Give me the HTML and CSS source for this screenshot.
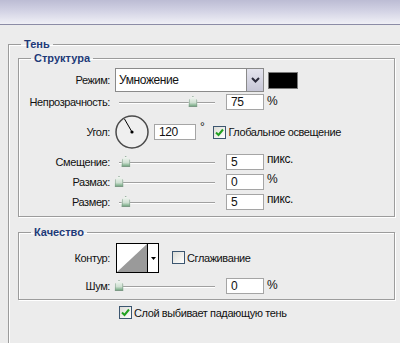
FILE: index.html
```html
<!DOCTYPE html>
<html lang="ru">
<head>
    <meta charset="UTF-8">
    <meta name="viewport" content="width=device-width, initial-scale=1.0">
    <title>Тень</title>
    <link rel="stylesheet" href="styles.css">
</head>
<body>
    <div class="titlebar"></div>

    <fieldset class="group group-outer">
        <legend>Тень</legend>

        <!-- Структура -->
        <fieldset class="group group-inner group-structure">
            <legend>Структура</legend>

            <div class="row row-mode">
                <span class="label">Режим:</span>
                <div class="select">
                    <span class="select-value">Умножение</span>
                    <span class="select-btn">
                        <svg width="9" height="6" viewBox="0 0 9 6"><path d="M1 1 L4.5 4.5 L8 1" fill="none" stroke="#2a2a3a" stroke-width="2"/></svg>
                    </span>
                </div>
                <span class="swatch"></span>
            </div>

            <div class="row row-field">
                <span class="label">Непрозрачность:</span>
                <div class="slider"><span class="thumb" style="left: 77%"></span></div>
                <span class="field">75</span>
                <span class="unit">%</span>
            </div>

            <div class="row row-angle">
                <span class="label">Угол:</span>
                <svg class="dial" width="36" height="36" viewBox="0 0 36 36">
                    <circle cx="18" cy="18" r="16" fill="#efefef" stroke="#4a4a4a" stroke-width="1.5"/>
                    <line x1="18" y1="18" x2="10.5" y2="5" stroke="#000" stroke-width="1"/>
                    <circle cx="18" cy="18" r="1.6" fill="#000"/>
                </svg>
                <span class="field field-angle">120</span>
                <span class="degree">°</span>
                <label class="check">
                    <span class="box checked">
                        <svg width="11" height="11" viewBox="0 0 11 11"><path d="M2 5.5 L4.5 8 L9 2.5" fill="none" stroke="#21a121" stroke-width="2"/></svg>
                    </span>
                    Глобальное освещение
                </label>
            </div>

            <div class="row row-slider">
                <span class="label">Смещение:</span>
                <div class="slider"><span class="thumb" style="left: 7%"></span></div>
                <span class="field">5</span>
                <span class="unit">пикс.</span>
            </div>

            <div class="row row-slider">
                <span class="label">Размах:</span>
                <div class="slider"><span class="thumb" style="left: 0%"></span></div>
                <span class="field">0</span>
                <span class="unit">%</span>
            </div>

            <div class="row row-slider">
                <span class="label">Размер:</span>
                <div class="slider"><span class="thumb" style="left: 7%"></span></div>
                <span class="field">5</span>
                <span class="unit">пикс.</span>
            </div>
        </fieldset>

        <!-- Качество -->
        <fieldset class="group group-inner group-quality">
            <legend>Качество</legend>

            <div class="row row-contour">
                <span class="label">Контур:</span>
                <div class="contour">
                    <svg class="contour-preview" width="30" height="28" viewBox="0 0 30 28">
                        <rect width="30" height="28" fill="#fff"/>
                        <path d="M0 28 L30 0 V28 Z" fill="#9a9a9a"/>
                    </svg>
                    <span class="contour-btn">
                        <svg width="5" height="3" viewBox="0 0 5 3"><path d="M0 0 H5 L2.5 3 Z" fill="#000"/></svg>
                    </span>
                </div>
                <label class="check check-smooth">
                    <span class="box"></span>
                    Сглаживание
                </label>
            </div>

            <div class="row row-field row-noise">
                <span class="label">Шум:</span>
                <div class="slider"><span class="thumb" style="left: 0%"></span></div>
                <span class="field">0</span>
                <span class="unit">%</span>
            </div>
        </fieldset>

        <div class="knockout">
            <label class="check">
                <span class="box checked">
                    <svg width="11" height="11" viewBox="0 0 11 11"><path d="M2 5.5 L4.5 8 L9 2.5" fill="none" stroke="#21a121" stroke-width="2"/></svg>
                </span>
                Слой выбивает падающую тень
            </label>
        </div>
    </fieldset>
</body>
</html>
```

FILE: styles.css
```css
body {
    margin: 0;
    width: 400px;
    height: 343px;
    overflow: hidden;
    background-color: #ececec;
    font-family: "Liberation Sans", Arial, sans-serif;
    font-size: 11px;
    letter-spacing: -0.4px;
    color: #111;
}

.titlebar {
    height: 24px;
    background: linear-gradient(#bcbcd4, #d2d2e4 45%, #f0f0f6);
    border-bottom: 1px solid #8c8ca6;
}

/* Group boxes */
.group {
    margin: 0;
    padding: 0;
    border: 1px solid #9c9c9c;
    box-shadow: inset 1px 1px 0 #fff, 1px 1px 0 #fff;
}

.group legend {
    font-weight: bold;
    line-height: 14px;
    letter-spacing: 0;
    color: #1e3a78;
    padding: 0 3px;
}

.group-outer {
    margin: 12px 0 0 8px;
    padding: 0 0 0 9px;
    width: 392px;
    height: 306px;
    box-sizing: border-box;
    border-right: none;
    border-bottom: none;
}

.group-outer > legend {
    margin-left: 3px;
}

.group-inner {
    width: 377px;
    box-sizing: border-box;
}

.group-inner > legend {
    margin-left: 12px;
}

.group-structure {
    padding: 3px 0 4px;
}

.group-quality {
    margin-top: 8px;
    padding: 4px 0 5px;
}

/* Rows */
.row {
    display: flex;
    align-items: center;
}

.label {
    width: 91px;
    flex: none;
    text-align: right;
}

.row-mode {
    height: 24px;
    margin-bottom: 2px;
}

.row-field {
    height: 16px;
}

.row-angle {
    height: 40px;
    margin-top: 2px;
}

.row-slider {
    height: 20px;
}

.row-contour {
    height: 30px;
}

.row-noise {
    margin-top: 5px;
}

/* Select */
.select {
    display: flex;
    margin-left: 5px;
    height: 24px;
}

.select-value {
    width: 127px;
    padding-left: 3px;
    background-color: #fff;
    border: 1px solid #8a8a8a;
    border-right: none;
    display: flex;
    align-items: center;
    font-size: 12px;
}

.select-btn {
    width: 16px;
    border: 1px solid #8a8a8a;
    background: linear-gradient(#e4e4ee, #c6c6d6);
    display: flex;
    justify-content: center;
    align-items: center;
}

.swatch {
    width: 28px;
    height: 15px;
    margin-left: 4px;
    background-color: #000;
    border: 1px solid #7a7a7a;
}

/* Sliders */
.slider {
    position: relative;
    width: 96px;
    height: 12px;
    margin-left: 9px;
    margin-right: 11px;
}

.slider::before {
    content: "";
    position: absolute;
    left: 0;
    right: 0;
    top: 6px;
    border-top: 1px solid #a0a0a0;
    border-bottom: 1px solid #fff;
}

.thumb {
    position: absolute;
    top: 0;
    width: 9px;
    height: 11px;
    transform: translateX(-50%);
    background: linear-gradient(#f6f9f6, #cfe0d2 60%, #5f9c6f);
    clip-path: polygon(50% 0, 100% 38%, 100% 100%, 0 100%, 0 38%);
    box-shadow: inset 0 0 0 1px #7d9a86;
}

/* Fields */
.field {
    width: 32px;
    height: 14px;
    padding-left: 4px;
    background-color: #fff;
    border: 1px solid #a5a5a5;
    display: flex;
    align-items: center;
    font-size: 12px;
}

.unit {
    margin-left: 3px;
    align-self: flex-start;
    font-size: 12px;
}

/* Angle */
.dial {
    margin-left: 4px;
}

.field-angle {
    width: 36px;
    margin-left: 4px;
}

.degree {
    align-self: flex-start;
    margin: 8px 0 0 4px;
    font-size: 12px;
}

/* Checkboxes */
.check {
    display: flex;
    align-items: center;
    gap: 2px;
}

.row-angle .check {
    margin-left: 9px;
}

.box {
    width: 11px;
    height: 11px;
    border: 1px solid #3c5670;
    background: linear-gradient(135deg, #dcdcd6, #fff);
    display: flex;
    justify-content: center;
    align-items: center;
}

/* Contour */
.contour {
    display: flex;
    margin-left: 6px;
    height: 28px;
    border: 1px solid #000;
}

.contour-btn {
    width: 10px;
    border-left: 1px solid #000;
    background-color: #fff;
    display: flex;
    justify-content: center;
    align-items: center;
}

.check-smooth {
    margin-left: 13px;
    margin-top: -1px;
}

/* Knockout option */
.knockout {
    margin: 6px 0 0 101px;
}
```
